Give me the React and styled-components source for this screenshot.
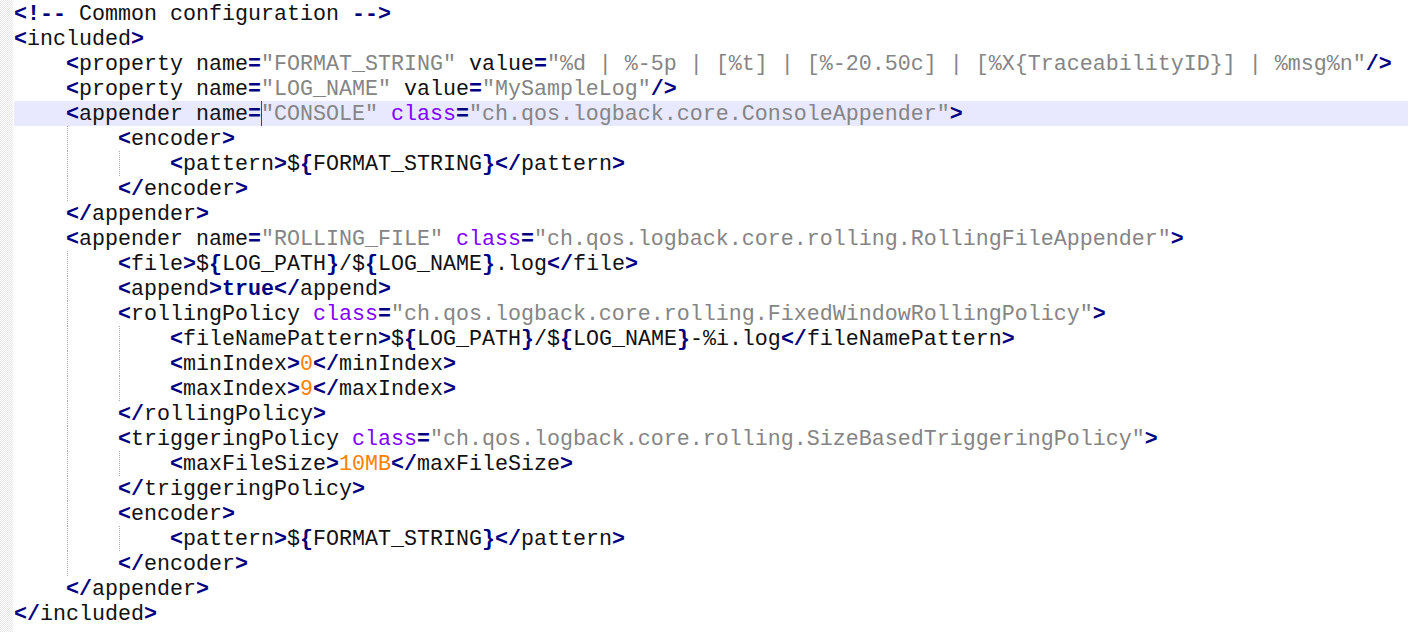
import React from 'react';
import styled, {createGlobalStyle, css} from 'styled-components';

const GlobalStyle = createGlobalStyle`
  html, body {
    margin: 0;
    padding: 0;
    background: #ffffff;
  }
`;

const SOURCE = [
  '<!-- Common configuration -->',
  '<included>',
  '    <property name="FORMAT_STRING" value="%d | %-5p | [%t] | [%-20.50c] | [%X{TraceabilityID}] | %msg%n"/>',
  '    <property name="LOG_NAME" value="MySampleLog"/>',
  '    <appender name="CONSOLE" class="ch.qos.logback.core.ConsoleAppender">',
  '        <encoder>',
  '            <pattern>${FORMAT_STRING}</pattern>',
  '        </encoder>',
  '    </appender>',
  '    <appender name="ROLLING_FILE" class="ch.qos.logback.core.rolling.RollingFileAppender">',
  '        <file>${LOG_PATH}/${LOG_NAME}.log</file>',
  '        <append>true</append>',
  '        <rollingPolicy class="ch.qos.logback.core.rolling.FixedWindowRollingPolicy">',
  '            <fileNamePattern>${LOG_PATH}/${LOG_NAME}-%i.log</fileNamePattern>',
  '            <minIndex>0</minIndex>',
  '            <maxIndex>9</maxIndex>',
  '        </rollingPolicy>',
  '        <triggeringPolicy class="ch.qos.logback.core.rolling.SizeBasedTriggeringPolicy">',
  '            <maxFileSize>10MB</maxFileSize>',
  '        </triggeringPolicy>',
  '        <encoder>',
  '            <pattern>${FORMAT_STRING}</pattern>',
  '        </encoder>',
  '    </appender>',
  '</included>',
];

// current line and caret column
const ACTIVE_LINE = 4;
const CARET_COL = 19;

const COLORS = {
  punct: '#000080',
  tag: '#111111',
  attr: '#111111',
  keyword: '#8000ff',
  value: '#858585',
  number: '#ff8000',
  text: '#111111',
  comment: '#111111',
};

const Editor = styled.div`
  display: flex;
  min-height: 100vh;
  background: #ffffff;
`;

const Gutter = styled.div`
  flex: 0 0 13px;
  background-color: #ffffff;
  background-image: repeating-conic-gradient(#e6e6e6 0 25%, #ffffff 0 50%);
  background-size: 2px 2px;
`;

const Code = styled.div`
  flex: 1;
  padding: 1px 0 0 1px;
  font-family: "Liberation Mono", "Courier New", monospace;
  font-size: 21.667px;
  line-height: 25px;
`;

const Line = styled.div`
  height: 25px;
  display: flex;
  align-items: stretch;
  ${p => p.$active && css`
    background: #e8e8ff;
  `}
`;

const Indent = styled.span`
  flex: 0 0 52px;
  ${p => p.$guide && css`
    background-image: linear-gradient(to bottom, #a8a8a8 50%, transparent 50%);
    background-size: 1px 2px;
    background-repeat: repeat-y;
    background-position: 1px 0;
  `}
`;

const Content = styled.span`
  display: flex;
  align-items: stretch;
`;

const Token = styled.span`
  white-space: pre;
  padding-top: 2px;
  line-height: 23px;
  color: ${p => COLORS[p.$kind]};
  font-weight: ${p => (p.$kind === 'punct' ? 700 : 400)};
`;

const Caret = styled.span`
  flex: 0 0 1px;
  margin-right: -1px;
  background: #5b2a9e;
`;

const tokenizeText = (text) => {
  return text
    .split(/(\{|\}|\btrue\b|\b\d\w*)/)
    .filter(Boolean)
    .map(part => {
      if (part === '{' || part === '}' || part === 'true') return {text: part, kind: 'punct'};
      if (/^\d/.test(part)) return {text: part, kind: 'number'};
      return {text: part, kind: 'text'};
    });
};

const tokenizeTag = (inner) => {
  const out = [];
  const open = inner.startsWith('</') ? '</' : '<';
  out.push({text: open, kind: 'punct'});
  let rest = inner.slice(open.length);
  const name = /^[\w:-]+/.exec(rest)[0];
  out.push({text: name, kind: 'tag'});
  rest = rest.slice(name.length);
  while (rest.length) {
    let m;
    if ((m = /^\s+/.exec(rest))) out.push({text: m[0], kind: 'text'});
    else if ((m = /^\/?>/.exec(rest))) out.push({text: m[0], kind: 'punct'});
    else if ((m = /^=/.exec(rest))) out.push({text: m[0], kind: 'punct'});
    else if ((m = /^"[^"]*"/.exec(rest))) out.push({text: m[0], kind: 'value'});
    else if ((m = /^[\w:-]+/.exec(rest))) out.push({text: m[0], kind: m[0] === 'class' ? 'keyword' : 'attr'});
    else {
      m = [rest[0]];
      out.push({text: m[0], kind: 'text'});
    }
    rest = rest.slice(m[0].length);
  }
  return out;
};

const tokenize = (src) => {
  const out = [];
  let i = 0;
  while (i < src.length) {
    if (src.startsWith('<!--', i)) {
      const end = src.indexOf('-->', i);
      out.push({text: '<!--', kind: 'punct'});
      out.push({text: src.slice(i + 4, end), kind: 'comment'});
      out.push({text: '-->', kind: 'punct'});
      i = end + 3;
    } else if (src[i] === '<') {
      const close = src.indexOf('>', i);
      out.push(...tokenizeTag(src.slice(i, close + 1)));
      i = close + 1;
    } else {
      const next = src.indexOf('<', i);
      const stop = next === -1 ? src.length : next;
      out.push(...tokenizeText(src.slice(i, stop)));
      i = stop;
    }
  }
  return out;
};

// splits tokens so the caret can sit at a given column
const withCaret = (tokens, col) => {
  const out = [];
  let pos = 0;
  tokens.forEach(tok => {
    const end = pos + tok.text.length;
    if (col > pos && col < end) {
      out.push({...tok, text: tok.text.slice(0, col - pos)});
      out.push({caret: true});
      out.push({...tok, text: tok.text.slice(col - pos)});
    } else {
      if (col === pos) out.push({caret: true});
      out.push(tok);
    }
    pos = end;
  });
  return out;
};

const CodeLine = ({src, active, caret}) => {
  const lead = src.match(/^ */)[0].length;
  const levels = Math.floor(lead / 4);
  let tokens = tokenize(src.slice(levels * 4));
  if (caret != null) tokens = withCaret(tokens, caret - levels * 4);

  return (
    <Line $active={active}>
      {Array.from({length: levels}, (_, k) => (
        <Indent key={`i${k}`} $guide={k > 0} />
      ))}
      <Content>
        {tokens.map((tok, k) => tok.caret
          ? <Caret key={k} />
          : <Token key={k} $kind={tok.kind}>{tok.text}</Token>)}
      </Content>
    </Line>
  );
};

export default function App() {
  return (
    <>
      <GlobalStyle />
      <Editor>
        <Gutter />
        <Code>
          {SOURCE.map((src, n) => (
            <CodeLine
              key={n}
              src={src}
              active={n === ACTIVE_LINE}
              caret={n === ACTIVE_LINE ? CARET_COL : null} />
          ))}
        </Code>
      </Editor>
    </>
  );
}
